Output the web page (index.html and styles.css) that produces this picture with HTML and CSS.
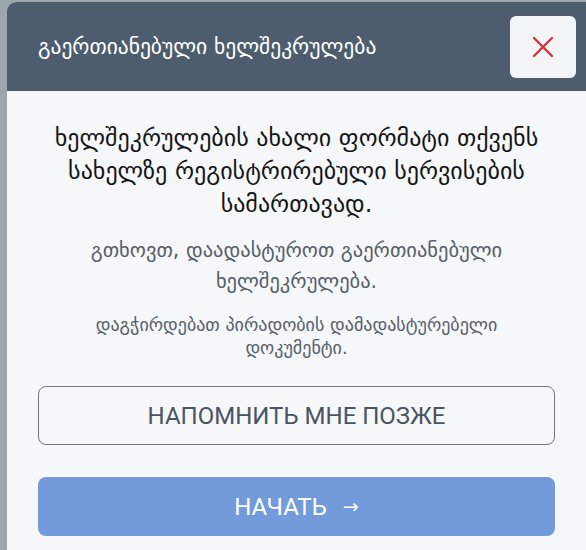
FILE: index.html
```html
<!DOCTYPE html>
<html lang="ka">
<head>
<meta charset="utf-8">
<link rel="stylesheet" href="styles.css">
</head>
<body>
<div class="page">
  <div class="modal">
    <div class="header">
      <div class="title">გაერთიანებული ხელშეკრულება</div>
      <button class="close" aria-label="close">
        <svg width="22" height="22" viewBox="0 0 22 22"><path d="M2 2 L20 20 M20 2 L2 20" stroke="#c9343d" stroke-width="2.4" stroke-linecap="round" fill="none"/></svg>
      </button>
    </div>
    <div class="body">
      <p class="lead">ხელშეკრულების ახალი ფორმატი თქვენს სახელზე რეგისტრირებული სერვისების სამართავად.</p>
      <p class="sub">გთხოვთ, დაადასტუროთ გაერთიანებული ხელშეკრულება.</p>
      <p class="note">დაგჭირდებათ პირადობის დამადასტურებელი დოკუმენტი.</p>
      <button class="btn btn-outline">НАПОМНИТЬ МНЕ ПОЗЖЕ</button>
      <button class="btn btn-primary">НАЧАТЬ <span class="arrow">→</span></button>
    </div>
  </div>
</div>
</body>
</html>
```
FILE: styles.css
```css
html, body {
  margin: 0;
  padding: 0;
  width: 586px;
  height: 550px;
  overflow: hidden;
  background: #9ea6ad;
}
.page {
  padding: 2px 0 0 7px;
  height: 548px;
}
.modal {
  height: 100%;
  background: #f5f7f9;
  border-top-left-radius: 9px;
  overflow: hidden;
  font-family: "DejaVu Sans", sans-serif;
}
.header {
  background: #4d5d6e;
  height: 89px;
  display: flex;
  align-items: center;
  justify-content: space-between;
  padding: 0 10px 0 31px;
  box-sizing: border-box;
}
.title {
  color: #ffffff;
  font-size: 21.5px;
  margin-top: -1px;
}
.close {
  width: 66px;
  height: 62px;
  border: none;
  border-radius: 6px;
  background: #f2f4f6;
  display: flex;
  align-items: center;
  justify-content: center;
  padding: 0;
}
.body {
  padding: 31px 20px 0 20px;
  display: flex;
  flex-direction: column;
  align-items: center;
  text-align: center;
}
.body p { margin: 0; }
.lead {
  font-size: 24px;
  line-height: 33px;
  color: #151515;
  width: 540px;
}
.sub {
  margin-top: 14px !important;
  font-size: 20.5px;
  line-height: 31px;
  color: #586067;
  width: 500px;
}
.note {
  margin-top: 16px !important;
  font-size: 18px;
  line-height: 23px;
  color: #586067;
  width: 450px;
}
.btn {
  width: 517px;
  height: 59px;
  border-radius: 8px;
  font-family: Roboto, "DejaVu Sans", sans-serif;
  font-size: 24px;
  box-sizing: border-box;
  flex: none;
}
.btn-outline {
  margin-top: 27px;
  background: transparent;
  border: 1px solid #6f7781;
  color: #4a5561;
}
.btn-primary {
  margin-top: 32px;
  background: #739bdc;
  border: none;
  color: #ffffff;
}
.arrow {
  font-size: 19px;
  margin-left: 10px;
  position: relative;
  top: -2px;
}
```
